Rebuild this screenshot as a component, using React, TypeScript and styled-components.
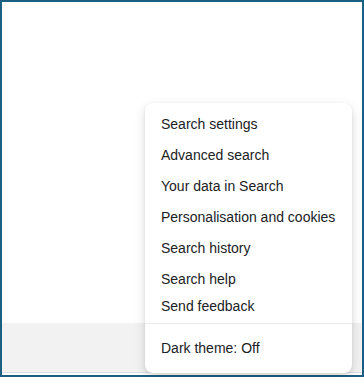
import React from "react";
import styled, { createGlobalStyle } from "styled-components";

const GlobalStyle = createGlobalStyle`
  html, body {
    margin: 0;
    padding: 0;
    background: #ffffff;
  }
  body {
    font-family: "Liberation Sans", Arial, sans-serif;
  }
`;

const Frame = styled.div`
  position: relative;
  box-sizing: border-box;
  width: 364px;
  height: 377px;
  border: 2px solid #1b5f83;
  display: flex;
  flex-direction: column;
  background: #ffffff;
`;

const Main = styled.div`
  flex: 1;
  background: #ffffff;
`;

const Footer = styled.div`
  height: 49px;
  background: #f2f2f2;
  border-bottom: 1px solid #dadce0;
  margin-bottom: 2px;
`;

const Menu = styled.div`
  position: absolute;
  left: 143px;
  top: 101px;
  width: 207px;
  box-sizing: border-box;
  background: #ffffff;
  border-radius: 8px;
  box-shadow: 0 4px 12px rgba(0, 0, 0, 0.14), 0 1px 3px rgba(0, 0, 0, 0.08);
  padding-top: 6px;
  overflow: hidden;
`;

const Section = styled.div<{ $padded?: boolean }>`
  display: flex;
  flex-direction: column;
  padding: ${(p) => (p.$padded ? "9px 0" : "0")};
`;

const Item = styled.div<{ $short?: boolean }>`
  height: ${(p) => (p.$short ? "22px" : "31px")};
  line-height: ${(p) => (p.$short ? "22px" : "31px")};
  padding: 0 16px;
  font-size: 14px;
  color: #202124;
  white-space: nowrap;
  cursor: pointer;
`;

const Divider = styled.div`
  height: 1px;
  background: #e8eaed;
  margin-top: 6px;
`;

const items = [
  "Search settings",
  "Advanced search",
  "Your data in Search",
  "Personalisation and cookies",
  "Search history",
  "Search help",
];

export default function App() {
  return (
    <>
      <GlobalStyle />
      <Frame>
        <Main />
        <Footer />
        <Menu>
          <Section>
            {items.map((label) => (
              <Item key={label}>{label}</Item>
            ))}
            <Item $short>Send feedback</Item>
          </Section>
          <Divider />
          <Section $padded>
            <Item>Dark theme: Off</Item>
          </Section>
        </Menu>
      </Frame>
    </>
  );
}
